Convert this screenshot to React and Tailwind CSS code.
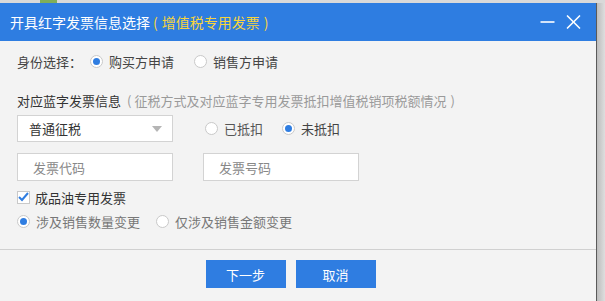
import React from "react";

const font = { fontFamily: '"Noto Sans CJK SC", "Noto Sans", sans-serif' };

function Radio({ checked }) {
  return (
    <span className="relative inline-flex h-[13px] w-[13px] shrink-0 items-center justify-center rounded-full border border-[#c9c9c9] bg-white">
      {checked && <span className="h-[7px] w-[7px] rounded-full bg-[#2f7de1]" />}
    </span>
  );
}

function RadioOpt({ checked, label, className = "", textClass = "text-[#444]" }) {
  return (
    <span className={"flex items-center " + className}>
      <Radio checked={checked} />
      <span className={"ml-[6px] text-[13px] leading-none " + textClass}>{label}</span>
    </span>
  );
}

export default function App() {
  return (
    <div className="flex h-[301px] w-[605px] flex-col overflow-hidden bg-[#d6d6d6]" style={font}>
      <div className="relative h-[3px] shrink-0 bg-[#d9d9d9]">
        <div className="absolute left-[40px] top-0 h-[3px] w-[17px] bg-[#7fae5a]" />
      </div>
      <div className="flex flex-1">
        <div className="flex w-[597px] shrink-0 flex-col border-r border-[#5a5a5a] bg-[#f3f3f3]">
          {/* title bar */}
          <div className="flex h-[38px] shrink-0 items-center bg-[#2e7de1] pl-[10px] pr-[15px]">
            <span className="text-[14px] leading-none text-white">开具红字发票信息选择</span>
            <span className="ml-[3px] text-[14px] leading-none text-[#f6d43c]">(</span>
            <span className="ml-[4px] text-[14px] leading-none text-[#f6d43c]">增值税专用发票</span>
            <span className="ml-[4px] text-[14px] leading-none text-[#f6d43c]">)</span>
            <div className="ml-auto flex items-center gap-[11px]">
              <svg width="15" height="14" viewBox="0 0 15 14">
                <line x1="0.5" y1="7" x2="14.5" y2="7" stroke="white" strokeWidth="1.6" />
              </svg>
              <svg width="15" height="14" viewBox="0 0 15 14">
                <line x1="1" y1="0.5" x2="14" y2="13.5" stroke="white" strokeWidth="1.5" />
                <line x1="14" y1="0.5" x2="1" y2="13.5" stroke="white" strokeWidth="1.5" />
              </svg>
            </div>
          </div>

          {/* body */}
          <div className="flex flex-col pl-[17px]">
            <div className="mt-[11px] flex h-[18px] items-center">
              <span className="text-[13px] leading-none text-[#444]">身份选择：</span>
              <RadioOpt checked label="购买方申请" className="ml-[8px]" />
              <RadioOpt label="销售方申请" className="ml-[20px]" />
            </div>

            <div className="mt-[21px] flex h-[18px] items-center">
              <span className="text-[13px] leading-none text-[#333]">对应蓝字发票信息</span>
              <span className="ml-[6px] text-[13px] leading-none text-[#9a9a9a]">(</span>
              <span className="ml-[3px] text-[13px] leading-none text-[#9a9a9a]">征税方式及对应蓝字专用发票抵扣增值税销项税额情况</span>
              <span className="ml-[4px] text-[13px] leading-none text-[#9a9a9a]">)</span>
            </div>

            <div className="mt-[6px] flex h-[27px] items-center">
              <div className="flex h-[27px] w-[156px] items-center border border-[#d3d3d3] bg-white pl-[11px] pr-[10px]">
                <span className="text-[13px] leading-none text-[#333]">普通征税</span>
                <svg className="ml-auto" width="10" height="6" viewBox="0 0 10 6">
                  <polygon points="0,0 10,0 5,6" fill="#b5b5b5" />
                </svg>
              </div>
              <RadioOpt label="已抵扣" className="ml-[32px]" textClass="text-[#555]" />
              <RadioOpt checked label="未抵扣" className="ml-[19px]" textClass="text-[#444]" />
            </div>

            <div className="mt-[11px] flex h-[28px] items-center">
              <div className="flex h-[28px] w-[156px] items-center border border-[#d3d3d3] bg-white pl-[15px]">
                <span className="text-[13px] leading-none text-[#888]">发票代码</span>
              </div>
              <div className="ml-[30px] flex h-[28px] w-[156px] items-center border border-[#d3d3d3] bg-white pl-[15px]">
                <span className="text-[13px] leading-none text-[#888]">发票号码</span>
              </div>
            </div>

            <div className="mt-[7px] flex h-[18px] items-center">
              <span className="flex h-[13px] w-[13px] items-center justify-center border border-[#c9c9c9] bg-white">
                <svg width="11" height="10" viewBox="0 0 11 10">
                  <polyline points="1,5 4,8 10,1" fill="none" stroke="#2f7de1" strokeWidth="2" />
                </svg>
              </span>
              <span className="ml-[5px] text-[13px] leading-none text-[#333]">成品油专用发票</span>
            </div>

            <div className="mt-[6px] flex h-[18px] items-center">
              <RadioOpt checked label="涉及销售数量变更" textClass="text-[#777]" />
              <RadioOpt label="仅涉及销售金额变更" className="ml-[16px]" textClass="text-[#777]" />
            </div>
          </div>

          {/* footer */}
          <div className="mt-[19px] flex flex-1 justify-center gap-[10px] border-t border-[#d0d0d0] pt-[10px] pr-[15px]">
            <button className="flex h-[28px] w-[80px] items-center justify-center bg-[#2f7de1] text-[13px] leading-none text-white">下一步</button>
            <button className="flex h-[28px] w-[80px] items-center justify-center bg-[#2f7de1] text-[13px] leading-none text-white">取消</button>
          </div>
        </div>
        <div className="flex-1 bg-gradient-to-r from-[#bdbdbd] to-[#dedede]" />
      </div>
    </div>
  );
}
